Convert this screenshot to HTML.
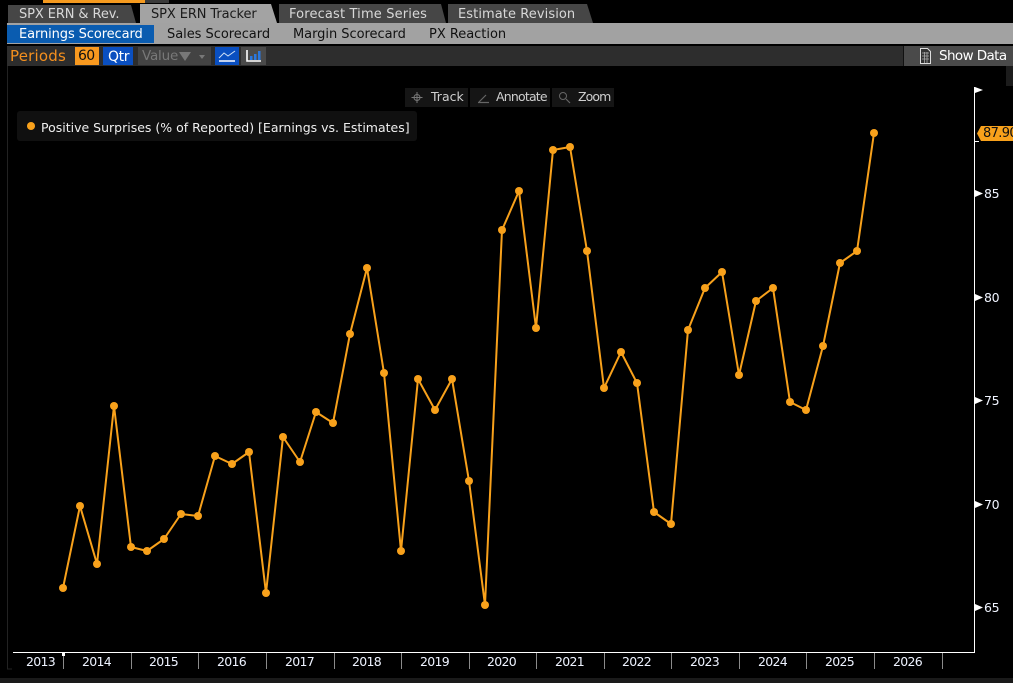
<!DOCTYPE html>
<html><head><meta charset="utf-8">
<style>
html,body{margin:0;padding:0;background:#000;}
#p{position:relative;width:1013px;height:683px;overflow:hidden;background:#000;font-family:"DejaVu Sans",sans-serif;}
.t{position:absolute;white-space:nowrap;font-size:13px;line-height:16px;transform-origin:0 0;}
.b{position:absolute;}
.y{font-size:12.500px;color:#eef3ff;letter-spacing:-.7px;top:654px;}
.v{font-size:12.500px;color:#f0f4ff;letter-spacing:-.3px;left:984px;}
</style></head>
<body><div id="p">
<div class="b" style="left:0;top:0;width:1013px;height:23px;background:#000"></div>
<div class="b" style="left:43px;top:0;width:102px;height:3px;background:#f59a1f"></div>
<div class="b" style="left:145px;top:0;width:24px;height:3px;background:#3a3a3a"></div>
<svg class="b" style="left:0;top:0" width="1013" height="24">
<path d="M8 23V5H131L136 23Z" fill="#464646"/>
<path d="M140 23V4H271L277 23Z" fill="#a3a3a3"/>
<path d="M279 23V4H441L446 23Z" fill="#464646"/>
<path d="M448 23V4H587L593 23Z" fill="#464646"/>
</svg>
<div class="t" style="left:19px;top:7px;color:#d8d8d8;letter-spacing:-.1px">SPX ERN &amp; Rev.</div>
<div class="t" style="left:151px;top:7px;color:#1a1a1a;letter-spacing:-.1px">SPX ERN Tracker</div>
<div class="t" style="left:289px;top:7px;color:#d8d8d8;letter-spacing:.15px">Forecast Time Series</div>
<div class="t" style="left:458px;top:7px;color:#d8d8d8;letter-spacing:.08px">Estimate Revision</div>

<div class="b" style="left:7px;top:23px;width:1006px;height:21px;background:#a2a2a2"></div>
<div class="b" style="left:7px;top:25px;width:147px;height:18px;background:#0a5cb0"></div>
<div class="t" style="left:19px;top:27px;color:#fff;letter-spacing:-.1px">Earnings Scorecard</div>
<div class="t" style="left:167px;top:27px;color:#111;letter-spacing:-.04px">Sales Scorecard</div>
<div class="t" style="left:293px;top:27px;color:#111;letter-spacing:-.04px">Margin Scorecard</div>
<div class="t" style="left:429px;top:27px;color:#111;letter-spacing:-.02px">PX Reaction</div>

<div class="b" style="left:7px;top:46px;width:1006px;height:20px;background:#2d2d2d"></div>
<div class="t" style="left:10px;top:48px;color:#f5901e;font-size:15px;letter-spacing:.2px">Periods</div>
<div class="b" style="left:75px;top:47px;width:24px;height:18px;background:#f8991f"></div>
<div class="t" style="left:78px;top:48px;color:#111;font-size:14px;letter-spacing:-.7px">60</div>
<div class="b" style="left:103px;top:47px;width:30px;height:18px;background:#0a4fc0"></div>
<div class="t" style="left:108px;top:49px;color:#fff;font-size:14px;letter-spacing:-.4px">Qtr</div>
<div class="b" style="left:138px;top:47px;width:73px;height:18px;background:#434343"></div>
<div class="t" style="left:142px;top:48px;color:#787878;font-size:13.500px;letter-spacing:-.2px">Value</div>
<svg class="b" style="left:178px;top:50px" width="34" height="13"><path d="M1 2H13L7 11Z" fill="#787878"/><path d="M21 5H27L24 9Z" fill="#787878"/></svg>
<div class="b" style="left:215px;top:47px;width:24px;height:18px;background:#0a4fc0"></div>
<svg class="b" style="left:215px;top:47px" width="24" height="18"><path d="M4 11L9 6L13 9L20 4" fill="none" stroke="#cfe0f5" stroke-width="1"/><path d="M4 14H20" stroke="#fff" stroke-width="1.500"/></svg>
<div class="b" style="left:241px;top:47px;width:25px;height:18px;background:#4a4a4a"></div>
<svg class="b" style="left:241px;top:47px" width="25" height="18"><path d="M6 3V14H20" fill="none" stroke="#fff" stroke-width="1.600"/><path d="M9 9h2.500v4H9zM13 7h2.500v6H13zM17 4h2.500v9H17z" fill="#2a78e0"/></svg>

<div class="b" style="left:903px;top:46px;width:110px;height:20px;background:#4a4a4a"></div>
<div class="b" style="left:903px;top:46px;width:1px;height:20px;background:#111"></div>
<svg class="b" style="left:918px;top:47px" width="15" height="18"><path d="M2.500 1.500H9.500L12.500 4.500V16.500H2.500Z" fill="#333" stroke="#ddd"/><path d="M4 6H11M4 9H11M4 12H11M6.500 5V16M9 5V16" stroke="#aaa" stroke-width=".8"/></svg>
<div class="t" style="left:939px;top:48px;color:#fff;font-size:13.500px;letter-spacing:-.6px">Show Data</div>
<div class="b" style="left:1006px;top:66px;width:7px;height:20px;background:#1c1c1c"></div>

<div class="b" style="left:405px;top:88px;width:63px;height:19px;background:#151515"></div>
<div class="b" style="left:470px;top:88px;width:80px;height:19px;background:#151515"></div>
<div class="b" style="left:552px;top:88px;width:62px;height:19px;background:#151515"></div>
<svg class="b" style="left:405px;top:88px" width="210" height="19">
<circle cx="12" cy="9.500" r="3" fill="none" stroke="#777"/><path d="M12 4V15M6.500 9.500H17.500" stroke="#777"/>
<path d="M74 14L81 7M73 14.500H84" stroke="#666" stroke-width="1.200" fill="none"/>
<circle cx="158" cy="8" r="3.500" fill="none" stroke="#666"/><path d="M161 11L165 15" stroke="#666" stroke-width="1.200"/>
</svg>
<div class="t" style="left:431px;top:89px;color:#cfcfcf;font-size:12.500px;letter-spacing:0">Track</div>
<div class="t" style="left:496px;top:89px;color:#cfcfcf;font-size:12.500px;letter-spacing:-.8px">Annotate</div>
<div class="t" style="left:578px;top:89px;color:#cfcfcf;font-size:12.500px;letter-spacing:-.9px">Zoom</div>

<div class="b" style="left:17px;top:111px;width:400px;height:30px;background:#101010;border-radius:3px"></div>
<div class="b" style="left:27px;top:122px;width:8px;height:8px;border-radius:50%;background:#f8a11b"></div>
<div class="t" style="left:41px;top:120px;color:#efefef;font-size:12.500px;letter-spacing:0">Positive Surprises (% of Reported) [Earnings vs. Estimates]</div>

<svg class="b" style="left:0;top:0" width="1013" height="683">
<path d="M7.500 66V669H12" fill="none" stroke="#222" stroke-width="1"/>
<polyline fill="none" stroke="#f8a11b" stroke-width="2" stroke-linejoin="round" points="63,588 80,506 97,564 114,406 131,547 147,551 164,539 181,514 198,516 215,456 232,464 249,452 266,593 283,437 300,462 316,412 333,423 350,334 367,268 384,373 401,551 418,379 435,410 452,379 469,481 485,605 502,230 519,191 536,328 553,150 570,147 587,251 604,388 621,352 637,383 654,512 671,524 688,330 705,288 722,272 739,375 756,301 773,288 790,402 806,410 823,346 840,263 857,251 874,133"/>
<g fill="#f8a11b"><circle cx="63" cy="588" r="4"/><circle cx="80" cy="506" r="4"/><circle cx="97" cy="564" r="4"/><circle cx="114" cy="406" r="4"/><circle cx="131" cy="547" r="4"/><circle cx="147" cy="551" r="4"/><circle cx="164" cy="539" r="4"/><circle cx="181" cy="514" r="4"/><circle cx="198" cy="516" r="4"/><circle cx="215" cy="456" r="4"/><circle cx="232" cy="464" r="4"/><circle cx="249" cy="452" r="4"/><circle cx="266" cy="593" r="4"/><circle cx="283" cy="437" r="4"/><circle cx="300" cy="462" r="4"/><circle cx="316" cy="412" r="4"/><circle cx="333" cy="423" r="4"/><circle cx="350" cy="334" r="4"/><circle cx="367" cy="268" r="4"/><circle cx="384" cy="373" r="4"/><circle cx="401" cy="551" r="4"/><circle cx="418" cy="379" r="4"/><circle cx="435" cy="410" r="4"/><circle cx="452" cy="379" r="4"/><circle cx="469" cy="481" r="4"/><circle cx="485" cy="605" r="4"/><circle cx="502" cy="230" r="4"/><circle cx="519" cy="191" r="4"/><circle cx="536" cy="328" r="4"/><circle cx="553" cy="150" r="4"/><circle cx="570" cy="147" r="4"/><circle cx="587" cy="251" r="4"/><circle cx="604" cy="388" r="4"/><circle cx="621" cy="352" r="4"/><circle cx="637" cy="383" r="4"/><circle cx="654" cy="512" r="4"/><circle cx="671" cy="524" r="4"/><circle cx="688" cy="330" r="4"/><circle cx="705" cy="288" r="4"/><circle cx="722" cy="272" r="4"/><circle cx="739" cy="375" r="4"/><circle cx="756" cy="301" r="4"/><circle cx="773" cy="288" r="4"/><circle cx="790" cy="402" r="4"/><circle cx="806" cy="410" r="4"/><circle cx="823" cy="346" r="4"/><circle cx="840" cy="263" r="4"/><circle cx="857" cy="251" r="4"/><circle cx="874" cy="133" r="4"/></g>
<path d="M974.500 87V652.500H13" fill="none" stroke="#fff" stroke-width="1"/>
<g fill="#fff"><path d="M975 87L983 90L975 93Z"/><path d="M975 190L983 193.500L975 197Z"/><path d="M975 294L983 297.500L975 301Z"/><path d="M975 397L983 400.500L975 404Z"/><path d="M975 501L983 504.500L975 508Z"/><path d="M975 604L983 607.500L975 611Z"/><rect x="975" y="141" width="4" height="1"/></g>
<g stroke="#8a8a8a" stroke-width="1"><path d="M63.500 653V669M131.500 653V669M198.500 653V669M266.500 653V669M334.500 653V669M401.500 653V669M469.500 653V669M536.500 653V669M604.500 653V669M671.500 653V669M739.500 653V669M806.500 653V669M874.500 653V669M942.500 653V669"/></g>
<rect x="62" y="653" width="3" height="3" fill="#fff"/>
<path d="M977 133.500L981 126H1013V141H981Z" fill="#f8a11b"/>
</svg>
<div class="t" style="left:983px;top:126px;color:#111;font-size:13px;letter-spacing:-.65px">87.90</div>
<div class="t v" style="top:186px">85</div>
<div class="t v" style="top:290px">80</div>
<div class="t v" style="top:393px">75</div>
<div class="t v" style="top:497px">70</div>
<div class="t v" style="top:600px">65</div>

<div class="t y" style="left:26px">2013</div>
<div class="t y" style="left:82px">2014</div>
<div class="t y" style="left:149px">2015</div>
<div class="t y" style="left:217px">2016</div>
<div class="t y" style="left:285px">2017</div>
<div class="t y" style="left:352px">2018</div>
<div class="t y" style="left:420px">2019</div>
<div class="t y" style="left:487px">2020</div>
<div class="t y" style="left:555px">2021</div>
<div class="t y" style="left:622px">2022</div>
<div class="t y" style="left:690px">2023</div>
<div class="t y" style="left:758px">2024</div>
<div class="t y" style="left:825px">2025</div>
<div class="t y" style="left:893px">2026</div>
<div class="b" style="left:0;top:678px;width:1013px;height:5px;background:#1a1a1a"></div>
</div></body></html>
